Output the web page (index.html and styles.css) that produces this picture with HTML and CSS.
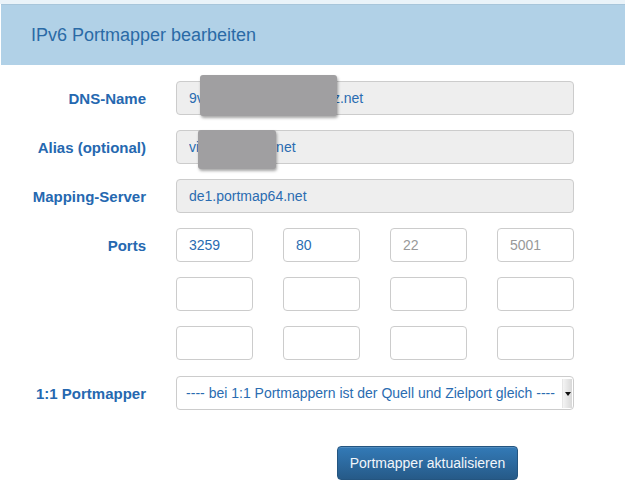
FILE: index.html
```html
<!DOCTYPE html>
<html lang="de">
<head>
<meta charset="utf-8">
<title>IPv6 Portmapper bearbeiten</title>
<link rel="stylesheet" href="styles.css">
</head>
<body>
<div class="topstrip"></div>
<div class="panel-heading"><h1 class="title">IPv6 Portmapper bearbeiten</h1></div>
<form class="form">
  <label class="lbl">DNS-Name</label>
  <div class="field"><input class="inp ro" value="9vxxxxxxxxxxxxxxxxxxiz.net" readonly><span class="redact r1"></span></div>
  <label class="lbl">Alias (optional)</label>
  <div class="field"><input class="inp ro" value="vixxxxxxxxxxi.net" readonly><span class="redact r2"></span></div>
  <label class="lbl">Mapping-Server</label>
  <div class="field"><input class="inp ro" value="de1.portmap64.net" readonly></div>
  <label class="lbl">Ports</label>
  <div class="ports">
    <input class="inp" value="3259"><input class="inp" value="80"><input class="inp" placeholder="22"><input class="inp" placeholder="5001">
  </div>
  <span></span>
  <div class="ports">
    <input class="inp"><input class="inp"><input class="inp"><input class="inp">
  </div>
  <span></span>
  <div class="ports">
    <input class="inp"><input class="inp"><input class="inp"><input class="inp">
  </div>
  <label class="lbl">1:1 Portmapper</label>
  <div class="selwrap">
    <div class="sel">---- bei 1:1 Portmappern ist der Quell und Zielport gleich ----</div>
    <div class="arrow"><span class="tri"></span></div>
  </div>
  <span></span>
  <div class="btnrow"><button type="button" class="btn">Portmapper aktualisieren</button></div>
</form>
</body>
</html>
```
FILE: styles.css
```css
* { box-sizing: border-box; }
html, body { margin: 0; padding: 0; background: #fff; }
body { font-family: "Liberation Sans", Arial, sans-serif; width: 625px; height: 488px; overflow: hidden; }
.topstrip { height: 4px; background: #eaf3f9; }
.panel-heading {
  margin-left: 1px;
  height: 61px;
  background: #b1d1e7;
  border-top: 1px solid #a8c6db;
  display: flex;
  align-items: center;
  padding-left: 30px;
}
.title { margin: 0; font-size: 18px; font-weight: normal; color: #2a6aa6; }
.form {
  display: grid;
  grid-template-columns: 146px 398px;
  column-gap: 30px;
  row-gap: 15px;
  padding-top: 16px;
  align-items: center;
}
.lbl { text-align: right; font-weight: bold; font-size: 15px; line-height: 34px; padding-top: 1px; height: 34px; color: #2568b0; }
.field { position: relative; }
.inp {
  display: block;
  width: 100%;
  height: 34px;
  border: 1px solid #cccccc;
  border-radius: 4px;
  padding: 0 12px;
  font-family: "Liberation Sans", Arial, sans-serif;
  font-size: 14px;
  color: #2a6cb1;
  background: #fff;
  outline: none;
}
.inp::placeholder { color: #999; }
.ro { background: #eeeeee; }
.ports { display: grid; grid-template-columns: repeat(4, 1fr); column-gap: 30px; }
.redact {
  position: absolute;
  background: #a09fa1;
  border-radius: 3px;
  box-shadow: 1px 2px 3px rgba(0,0,0,0.35);
}
.r1 { left: 24px; top: -6px; width: 137px; height: 41px; }
.r2 { left: 22px; top: 0px; width: 78px; height: 39px; }
.selwrap {
  position: relative;
  height: 34px;
  margin-top: 1px;
  border: 1px solid #cccccc;
  border-radius: 4px;
  background: #fff;
  display: flex;
  align-items: center;
  overflow: hidden;
}
.sel {
  flex: 1;
  text-align: center;
  font-size: 14px;
  color: #2a6cb1;
  white-space: nowrap;
  overflow: hidden;
  padding-left: 2px;
}
.arrow {
  width: 10px;
  align-self: stretch;
  margin: 2px 1px 1px 0;
  background: linear-gradient(to right, #f4f4f4, #d8d8d8);
  border-left: 1px solid #e6e6e6;
  display: flex;
  align-items: center;
  justify-content: center;
}
.tri { width: 0; height: 0; border-left: 3px solid transparent; border-right: 3px solid transparent; border-top: 4px solid #111; }
.btnrow { padding-top: 21px; padding-left: 161px; }
.btn {
  height: 34px;
  width: 181px;
  border: 1px solid #245580;
  border-radius: 4px;
  background: linear-gradient(to bottom, #337ab7, #265a88);
  color: #f2f6fa;
  font-family: "Liberation Sans", Arial, sans-serif;
  font-size: 14px;
  padding: 0;
  box-shadow: inset 0 1px 0 rgba(255,255,255,0.15);
}
```
